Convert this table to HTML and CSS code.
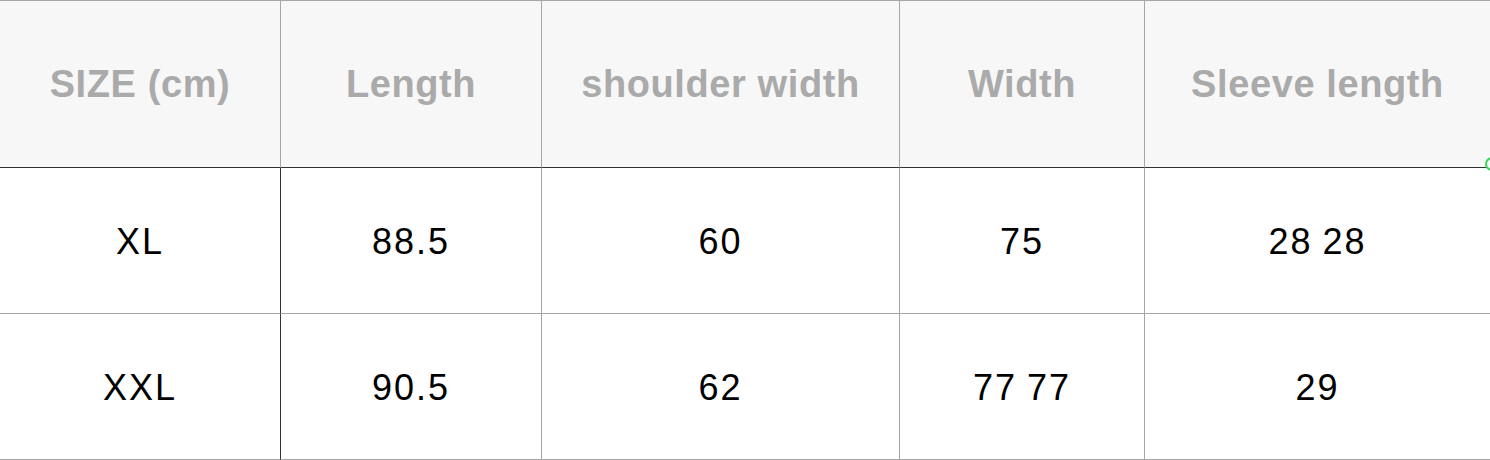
FILE: index.html
```html
<!DOCTYPE html>
<html>
<head>
<meta charset="utf-8">
<link rel="stylesheet" href="styles.css">
</head>
<body>
<div class="sheet">
  <div class="size-table">
    <div class="cell head">SIZE (cm)</div>
    <div class="cell head">Length</div>
    <div class="cell head">shoulder width</div>
    <div class="cell head">Width</div>
    <div class="cell head last">Sleeve length</div>

    <div class="cell body first-col">XL</div>
    <div class="cell body">88.5</div>
    <div class="cell body">60</div>
    <div class="cell body">75</div>
    <div class="cell body last">28 28</div>

    <div class="cell body first-col">XXL</div>
    <div class="cell body">90.5</div>
    <div class="cell body">62</div>
    <div class="cell body">77 77</div>
    <div class="cell body last">29</div>
  </div>
  <span class="handle"></span>
</div>
</body>
</html>
```
FILE: styles.css
```css
html, body {
  margin: 0;
  padding: 0;
  background: #ffffff;
}

.sheet {
  position: relative;
  width: 1490px;
  height: 460px;
  overflow: hidden;
}

.size-table {
  display: grid;
  grid-template-columns: 281px 261px 358px 245px 345px;
  grid-template-rows: 167px 146px 146px;
  border-top: 1px solid #a6a6a6;
  font-family: "Liberation Sans", Arial, sans-serif;
}

.cell {
  box-sizing: border-box;
  display: flex;
  align-items: center;
  justify-content: center;
  border-right: 1px solid #a6a6a6;
  border-bottom: 1px solid #a6a6a6;
  white-space: nowrap;
}

.cell.last {
  border-right: none;
}

.head {
  background: #f7f7f7;
  color: #aaaaaa;
  font-weight: bold;
  font-size: 38px;
  letter-spacing: 0.6px;
  border-bottom-color: #333333;
}

.body {
  color: #000000;
  font-size: 36px;
  letter-spacing: 2px;
  word-spacing: -2px;
  padding-top: 2px;
}

.first-col {
  border-right-color: #333333;
}

.handle {
  position: absolute;
  left: 1485px;
  top: 157px;
  width: 14px;
  height: 14px;
  box-sizing: border-box;
  border: 2px solid #3ed35a;
  border-radius: 50%;
  background: #ffffff;
}
```
